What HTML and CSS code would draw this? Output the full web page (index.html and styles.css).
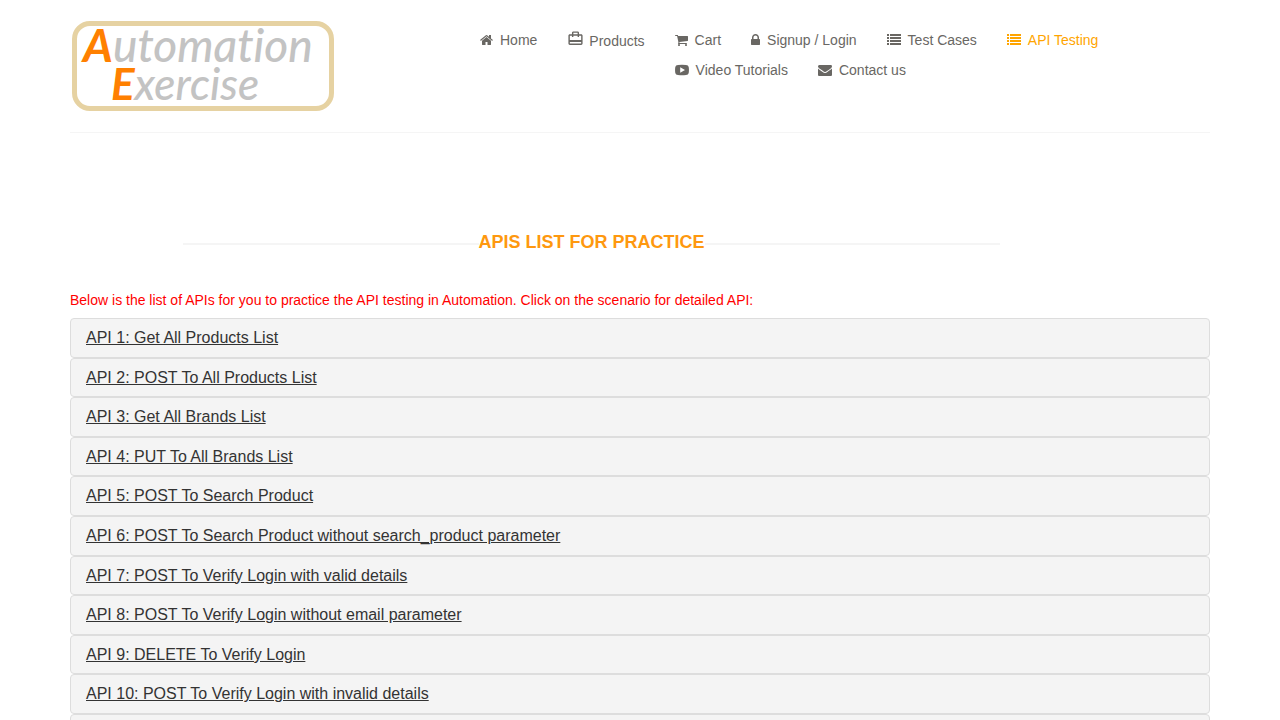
FILE: index.html
```html
<!DOCTYPE html>
<html lang="en">
<head>
<meta charset="utf-8">
<meta name="viewport" content="width=device-width, initial-scale=1">
<title>API Testing</title>
<link rel="stylesheet" href="styles.css">
</head>
<body>
<header class="container">
  <div class="header-row">
    <a class="logo" href="#" aria-label="Automation Exercise">
      <span class="logo-top"><span class="initial">A</span>utomation</span>
      <span class="logo-bottom"><span class="initial">E</span>xercise</span>
    </a>
    <nav class="menu">
      <ul>
        <li><a href="#"><svg width="13" height="14" viewBox="0 0 1664 1792"><path d="M1408 992v480q0 26-19 45t-45 19h-384v-384h-256v384h-384q-26 0-45-19t-19-45v-480q0-1 .5-3t.5-3l575-474 575 474q1 2 1 6zm223-69l-62 74q-8 9-21 11h-3q-13 0-21-7l-692-577-692 577q-12 8-24 7-13-2-21-11l-62-74q-8-10-7-23.500t11-21.500l719-599q32-26 76-26t76 26l244 204v-195q0-14 9-23t23-9h192q14 0 23 9t9 23v408l219 182q10 8 11 21.500t-7 23.500z"/></svg>Home</a></li>
        <li class="products"><a href="#"><svg width="17" height="17" viewBox="0 0 24 24"><path d="M20 6h-3V4c0-1.110-.89-2-2-2H9c-1.110 0-2 .89-2 2v2H4c-1.110 0-2 .89-2 2v11c0 1.110.89 2 2 2h16c1.110 0 2-.89 2-2V8c0-1.110-.89-2-2-2zM9 4h6v2H9V4zm11 15H4v-2h16v2zm0-5H4V8h3v2h2V8h6v2h2V8h3v6z"/></svg>Products</a></li>
        <li><a href="#"><svg width="13" height="14" viewBox="64 0 1664 1792"><path d="M704 1536q0 52-38 90t-90 38-90-38-38-90 38-90 90-38 90 38 38 90zm896 0q0 52-38 90t-90 38-90-38-38-90 38-90 90-38 90 38 38 90zm128-1088v512q0 24-16.500 42.500t-40.500 21.500l-1044 122q13 60 13 70 0 16-24 64h920q26 0 45 19t19 45-19 45-45 19h-1024q-26 0-45-19t-19-45q0-11 8-31.500t16-36 21.500-40 15.500-29.500l-177-823h-204q-26 0-45-19t-19-45 19-45 45-19h256q16 0 28.500 6.500t19.500 15.500 13 24.500 8 26 5.500 29.500 4.500 26h1201q26 0 45 19t19 45z"/></svg>Cart</a></li>
        <li><a href="#"><svg width="9" height="14" viewBox="320 0 1152 1792"><path d="M640 768h512v-192q0-106-75-181t-181-75-181 75-75 181v192zm832 96v576q0 40-28 68t-68 28h-960q-40 0-68-28t-28-68v-576q0-40 28-68t68-28h32v-192q0-184 132-316t316-132 316 132 132 316v192h32q40 0 68 28t28 68z"/></svg>Signup / Login</a></li>
        <li><a href="#"><svg width="14" height="14" viewBox="0 0 14 14" shape-rendering="crispEdges"><path d="M0 1h2v2H0zM3 1h11v2H3zM0 4h2v2H0zM3 4h11v2H3zM0 7h2v2H0zM3 7h11v2H3zM0 10h2v2H0zM3 10h11v2H3z"/></svg>Test Cases</a></li>
        <li><a class="active" href="#"><svg width="14" height="14" viewBox="0 0 14 14" shape-rendering="crispEdges"><path d="M0 1h2v2H0zM3 1h11v2H3zM0 4h2v2H0zM3 4h11v2H3zM0 7h2v2H0zM3 7h11v2H3zM0 10h2v2H0zM3 10h11v2H3z"/></svg>API Testing</a></li>
        <li><a href="#"><svg width="14" height="14" viewBox="0 0 14 14"><path fill-rule="evenodd" d="M3 2Q7 1.600 11 2Q13.400 2 13.700 4Q14.200 7 13.700 10Q13.400 12 11 12Q7 12.400 3 12Q.6 12 .3 10Q-.2 7 .3 4Q.6 2 3 2zM5.200 4.200v5.600L10 7z"/></svg>Video Tutorials</a></li>
        <li><a href="#"><svg width="14" height="14" viewBox="0 0 1792 1792"><path d="M1792 710v794q0 66-47 113t-113 47h-1472q-66 0-113-47t-47-113v-794q44 49 101 87 362 246 497 345 57 42 92.500 65.500t94.500 48 110 24.500h2q51 0 110-24.500t94.500-48 92.500-65.500q170-123 498-345 57-39 100-87zm0-294q0 79-49 151t-122 123q-376 261-468 325-10 7-42.500 31t-54 38.500-52 32.500-57.500 27-50 9h-2q-23 0-50-9t-57.500-27-52-32.500-54-38.500-42.500-31q-91-64-262-182.500t-205-142.500q-62-42-117-115.500t-55-136.500q0-78 41.500-130t118.500-52h1472q65 0 112.500 47t47.500 113z"/></svg>Contact us</a></li>
      </ul>
    </nav>
  </div>
</header>
<main class="container">
  <h2 class="title">APIs List for practice</h2>
  <p class="intro">Below is the list of APIs for you to practice the API testing in Automation. Click on the scenario for detailed API:</p>
  <div class="panels">
    <h4 class="panel"><a href="#">API 1: Get All Products List</a></h4>
    <h4 class="panel"><a href="#">API 2: POST To All Products List</a></h4>
    <h4 class="panel"><a href="#">API 3: Get All Brands List</a></h4>
    <h4 class="panel"><a href="#">API 4: PUT To All Brands List</a></h4>
    <h4 class="panel"><a href="#">API 5: POST To Search Product</a></h4>
    <h4 class="panel"><a href="#">API 6: POST To Search Product without search_product parameter</a></h4>
    <h4 class="panel"><a href="#">API 7: POST To Verify Login with valid details</a></h4>
    <h4 class="panel"><a href="#">API 8: POST To Verify Login without email parameter</a></h4>
    <h4 class="panel"><a href="#">API 9: DELETE To Verify Login</a></h4>
    <h4 class="panel"><a href="#">API 10: POST To Verify Login with invalid details</a></h4>
    <h4 class="panel"><a href="#">API 11: POST To Create/Register User Account</a></h4>
  </div>
</main>
</body>
</html>
```
FILE: styles.css
```css
* { box-sizing: border-box; }
body {
  margin: 0;
  background: #fff;
  color: #333;
  font: 14px/20px "Liberation Sans", Arial, sans-serif;
}
.container {
  max-width: 1170px;
  margin: 0 auto;
  padding: 0 15px;
}
.header-row {
  display: flex;
  align-items: flex-start;
  padding: 20px 0;
  border-bottom: 1px solid #f5f5f5;
}
.logo {
  flex: none;
  display: flex;
  flex-direction: column;
  width: 262px;
  height: 90px;
  margin: 1px 0 1px 2px;
  border: 5px solid #e6d2a2;
  border-radius: 18px;
  color: #c3c3c3;
  font-family: Lato, sans-serif;
  font-style: italic;
  font-weight: 500;
  font-variant-ligatures: none;
  line-height: 38px;
  white-space: nowrap;
  text-decoration: none;
}
.logo-top { padding-left: 6px; font-size: 46px; }
.logo-bottom { padding-left: 34px; font-size: 44px; }
.initial { color: #ff8000; font-weight: 700; }
.menu {
  flex: 1;
  margin-left: 131px;
}
.menu ul {
  display: flow-root;
  margin: 0;
  padding: 0;
  list-style: none;
}
.menu li {
  float: left;
  height: 30px;
  padding: 10px 15px 0;
}
.menu .products { height: 32px; }
.menu a {
  display: flex;
  align-items: center;
  gap: 7px;
  color: #696763;
  text-decoration: none;
}
.menu svg { flex: none; fill: currentColor; }
.menu .products a { gap: 5px; height: 22px; line-height: 20px; }
.menu .products svg { margin-bottom: 6px; }
.menu .active { color: orange; }
.title {
  display: flex;
  align-items: center;
  margin: 98px 210px 0 113px;
  color: #fe980f;
  font-size: 18px;
  line-height: 22px;
  text-transform: uppercase;
  white-space: nowrap;
}
.title::before, .title::after {
  content: "";
  flex: 1;
  height: 2px;
  margin-top: 3px;
  background: #f5f5f5;
}
.intro {
  margin: 37px 0 8px;
  color: red;
}
.panel {
  margin: 0;
  padding: 10px 15px;
  border: 1px solid #ddd;
  border-radius: 4px;
  background: #f4f4f4;
  font-size: 16px;
  font-weight: 400;
  line-height: 1.1;
}
.panel a { color: #333; }
```
